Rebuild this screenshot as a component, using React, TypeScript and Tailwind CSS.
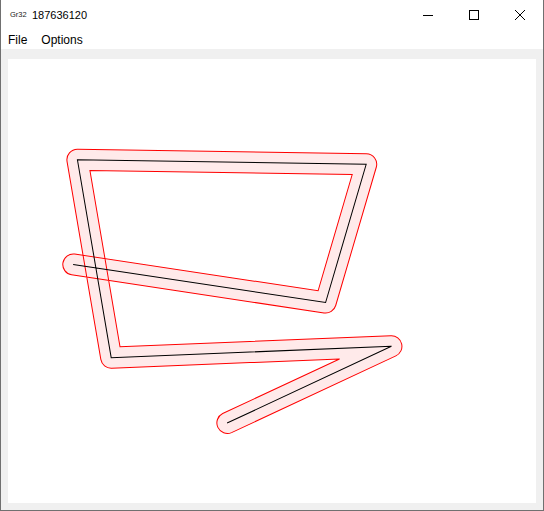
import React from "react";

type Pt = [number, number];

// polyline in page coordinates (the svg viewBox matches the page)
const points: Pt[] = [
  [73, 264],
  [325, 302],
  [365.5, 164],
  [77.3, 159.5],
  [111, 357],
  [390.7, 345.7],
  [226.7, 422.3],
];

const GROW = 10.5;

const f = (n: number) => n.toFixed(2);

function side(pts: Pt[], d: number): { start: Pt; cmds: string[]; end: Pt } {
  const dirs = pts.slice(0, -1).map((p, i) => {
    const dx = pts[i + 1][0] - p[0];
    const dy = pts[i + 1][1] - p[1];
    const len = Math.hypot(dx, dy);
    return [dx / len, dy / len] as Pt;
  });
  const normals = dirs.map(([ux, uy]) => [-uy, ux] as Pt);
  const start: Pt = [pts[0][0] + d * normals[0][0], pts[0][1] + d * normals[0][1]];
  const cmds: string[] = [];
  for (let i = 1; i < pts.length - 1; i++) {
    const [ax, ay] = dirs[i - 1];
    const [bx, by] = dirs[i];
    const na = normals[i - 1];
    const nb = normals[i];
    const cross = ax * by - ay * bx;
    const p = pts[i];
    if (cross > 0) {
      const dot = na[0] * nb[0] + na[1] * nb[1];
      const k = d / (1 + dot);
      cmds.push(`L ${f(p[0] + (na[0] + nb[0]) * k)} ${f(p[1] + (na[1] + nb[1]) * k)}`);
    } else {
      cmds.push(`L ${f(p[0] + d * na[0])} ${f(p[1] + d * na[1])}`);
      cmds.push(`A ${d} ${d} 0 0 0 ${f(p[0] + d * nb[0])} ${f(p[1] + d * nb[1])}`);
    }
  }
  const last = pts[pts.length - 1];
  const nl = normals[normals.length - 1];
  const end: Pt = [last[0] + d * nl[0], last[1] + d * nl[1]];
  cmds.push(`L ${f(end[0])} ${f(end[1])}`);
  return { start, cmds, end };
}

function outline(pts: Pt[], d: number) {
  const a = side(pts, d);
  const b = side([...pts].reverse(), d);
  return [
    `M ${f(a.start[0])} ${f(a.start[1])}`,
    ...a.cmds,
    `A ${d} ${d} 0 0 0 ${f(b.start[0])} ${f(b.start[1])}`,
    ...b.cmds,
    `A ${d} ${d} 0 0 0 ${f(a.start[0])} ${f(a.start[1])}`,
    "Z",
  ].join(" ");
}

function Caption() {
  return (
    <div className="flex h-[30px] items-center bg-white">
      <span className="ml-[9px] w-[22px] text-[7.5px] leading-none text-[#222]">Gr32</span>
      <span className="text-[11px] leading-none text-black">187636120</span>
      <div className="ml-auto flex h-full">
        <div className="flex w-[46px] items-center justify-center">
          <svg width="10" height="10" viewBox="0 0 10 10">
            <path d="M0 5.5 H10" stroke="#000" strokeWidth="1" />
          </svg>
        </div>
        <div className="flex w-[46px] items-center justify-center">
          <svg width="10" height="10" viewBox="0 0 10 10">
            <rect x="0.5" y="0.5" width="9" height="9" fill="none" stroke="#000" strokeWidth="1" />
          </svg>
        </div>
        <div className="flex w-[46px] items-center justify-center">
          <svg width="10" height="10" viewBox="0 0 10 10">
            <path d="M0 0 L10 10 M10 0 L0 10" stroke="#000" strokeWidth="1" />
          </svg>
        </div>
      </div>
    </div>
  );
}

export default function App() {
  const d = outline(points, GROW);
  const line = points.map((p, i) => `${i ? "L" : "M"} ${p[0]} ${p[1]}`).join(" ");

  return (
    <div className="flex h-[511px] w-[544px] flex-col border-x border-b border-[#707070] bg-white font-['Liberation_Sans',Arial,sans-serif]">
      <Caption />
      <div className="flex h-[19px] gap-[14px] bg-white pl-[7px] pt-[2px] text-[12px] leading-[17px] text-black">
        <span>File</span>
        <span>Options</span>
      </div>
      <div className="flex flex-1 bg-[#f0f0f0] pb-[7px] pl-[7px] pr-[7px] pt-[10px]">
        <div className="flex-1 bg-white">
          <svg className="block h-full w-full" viewBox="8 59 527 443">
            <path d={d} fill="#ffeaea" stroke="#ff0000" strokeWidth="1" fillRule="nonzero" />
            <path d={line} fill="none" stroke="#000" strokeWidth="1" />
          </svg>
        </div>
      </div>
    </div>
  );
}
